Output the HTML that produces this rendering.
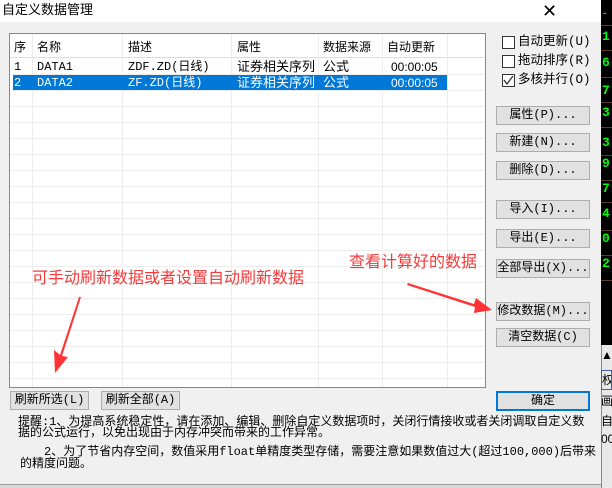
<!DOCTYPE html>
<html><head><meta charset="utf-8"><style>
*{margin:0;padding:0;box-sizing:border-box}
body{width:612px;height:488px;overflow:hidden;background:#f0f0f0;position:relative;font-family:"Liberation Sans","Noto Sans CJK SC",sans-serif;font-size:12px;color:#000}
.abs{position:absolute}
.title{left:0;top:0;width:601px;height:22px;background:#fff;font-size:13px;line-height:20px;padding-left:2px}
.strip{left:601px;top:0;width:11px;height:345px;background:#000}
.g{position:absolute;left:602px;color:#0f0;font-family:"Liberation Mono",monospace;font-size:13px;font-weight:bold;line-height:14px}
.hl{position:absolute;left:601px;width:11px;height:1px;background:#5a3a2a}
.list{left:9px;top:33px;width:477px;height:355px;background:#fff;border:1px solid #828790;overflow:hidden}
.hline{position:absolute;left:0;width:100%;height:1px;background:#ececec}
.vline{position:absolute;top:0;width:1px;height:100%;background:#ececec}
.cell{position:absolute;white-space:nowrap;line-height:16px}
.btn{position:absolute;background:#e1e1e1;border:1px solid #adadad;text-align:center;line-height:17px;height:19px;font-family:"Liberation Mono","Noto Sans CJK SC",monospace;font-size:12px}
.cb{position:absolute;left:502px;width:13px;height:13px;border:1px solid #333;background:#fff}
.cbl{position:absolute;left:518px;font-family:"Liberation Mono","Noto Sans CJK SC",monospace;font-size:12.5px;line-height:13px;white-space:nowrap}
.red{position:absolute;color:#f53a3a;font-size:16px;line-height:18px;white-space:nowrap}
.tip{position:absolute;left:18px;font-family:"Liberation Mono","Noto Sans CJK SC",monospace;font-size:12px;line-height:12px;white-space:nowrap;letter-spacing:0}
</style></head><body>
<div class="abs title">自定义数据管理</div>
<div class="abs" style="left:542px;top:2px;font-size:18px;line-height:18px;font-weight:300">✕</div>
<div class="abs strip"></div>
<div class="g" style="top:7px;font-size:9px">-</div>
<div class="hl" style="top:25px"></div>
<div class="g" style="top:30px">1</div><div class="hl" style="top:50px"></div>
<div class="g" style="top:56px">6</div><div class="hl" style="top:77px"></div>
<div class="g" style="top:84px">7</div><div class="hl" style="top:102px"></div>
<div class="g" style="top:106px">3</div><div class="hl" style="top:127px"></div>
<div class="g" style="top:136px">3</div><div class="hl" style="top:155px"></div>
<div class="g" style="top:157px">9</div><div class="hl" style="top:180px"></div>
<div class="g" style="top:182px">7</div><div class="hl" style="top:202px"></div>
<div class="g" style="top:207px">4</div><div class="hl" style="top:230px"></div>
<div class="g" style="top:232px">0</div><div class="hl" style="top:255px"></div>
<div class="g" style="top:257px">2</div><div class="hl" style="top:280px"></div>
<div class="abs" style="left:601px;top:345px;width:11px;height:143px;background:#e8e8e8;border-left:1px solid #888"></div>
<div class="abs" style="left:601px;top:348px;font-size:12px">▲</div>
<div class="abs" style="left:601px;top:370px;height:20px;width:11px;border:1px solid #4060a0;font-size:12px;overflow:hidden">权</div>
<div class="abs" style="left:601px;top:392px;width:11px;overflow:hidden;font-size:12px">画</div>
<div class="abs" style="left:601px;top:412px;width:11px;overflow:hidden;font-size:12px">自</div>
<div class="abs" style="left:601px;top:432px;width:11px;overflow:hidden;font-size:12px">00</div>
<div class="abs" style="left:0;top:484px;width:601px;height:4px;background:#d8d8d8;border-top:1px solid #999"></div>

<div class="abs list">
 <div class="hline" style="top:23px;background:#dcdcdc"></div>
 <div class="hline" style="top:40px"></div><div class="hline" style="top:56px"></div>
 <div class="hline" style="top:72px"></div><div class="hline" style="top:88px"></div>
 <div class="hline" style="top:104px"></div><div class="hline" style="top:120px"></div>
 <div class="hline" style="top:136px"></div><div class="hline" style="top:152px"></div>
 <div class="hline" style="top:168px"></div><div class="hline" style="top:184px"></div>
 <div class="hline" style="top:200px"></div><div class="hline" style="top:216px"></div>
 <div class="hline" style="top:232px"></div><div class="hline" style="top:248px"></div>
 <div class="hline" style="top:264px"></div><div class="hline" style="top:280px"></div>
 <div class="hline" style="top:296px"></div><div class="hline" style="top:312px"></div>
 <div class="hline" style="top:328px"></div><div class="hline" style="top:344px"></div>
 <div class="vline" style="left:22px"></div><div class="vline" style="left:112px"></div>
 <div class="vline" style="left:221px"></div><div class="vline" style="left:308px"></div>
 <div class="vline" style="left:372px"></div><div class="vline" style="left:437px"></div>
 <div class="abs" style="left:3px;top:41px;width:434px;height:15px;background:#0078d7"></div>
 <div class="cell" style="left:4px;top:5px">序</div>
 <div class="cell" style="left:27px;top:5px">名称</div>
 <div class="cell" style="left:118px;top:5px">描述</div>
 <div class="cell" style="left:227px;top:5px">属性</div>
 <div class="cell" style="left:313px;top:5px">数据来源</div>
 <div class="cell" style="left:377px;top:5px">自动更新</div>
 <div style="font-family:'Liberation Mono','Noto Sans CJK SC',monospace">
 <div class="cell" style="left:4px;top:25px">1</div>
 <div class="cell" style="left:27px;top:25px">DATA1</div>
 <div class="cell" style="left:118px;top:25px">ZDF.ZD(日线)</div>
 <div class="cell" style="left:227px;top:25px;font-family:'Liberation Sans','Noto Sans CJK SC',sans-serif;font-size:13px">证券相关序列</div>
 <div class="cell" style="left:313px;top:25px;font-family:'Liberation Sans','Noto Sans CJK SC',sans-serif;font-size:13px">公式</div>
 <div class="cell" style="left:381px;top:25px;font-family:'Liberation Sans',sans-serif">00:00:05</div>
 <div style="color:#fff">
 <div class="cell" style="left:4px;top:41px">2</div>
 <div class="cell" style="left:27px;top:41px">DATA2</div>
 <div class="cell" style="left:118px;top:41px">ZF.ZD(日线)</div>
 <div class="cell" style="left:227px;top:41px;font-family:'Liberation Sans','Noto Sans CJK SC',sans-serif;font-size:13px">证券相关序列</div>
 <div class="cell" style="left:313px;top:41px;font-family:'Liberation Sans','Noto Sans CJK SC',sans-serif;font-size:13px">公式</div>
 <div class="cell" style="left:381px;top:41px;font-family:'Liberation Sans',sans-serif">00:00:05</div>
 </div></div>
</div>

<div class="cb" style="top:36px"></div><div class="cbl" style="top:36px">自动更新(U)</div>
<div class="cb" style="top:55px"></div><div class="cbl" style="top:55px">拖动排序(R)</div>
<div class="cb" style="top:74px"></div><div class="cbl" style="top:74px">多核并行(O)</div>
<svg class="abs" style="left:503px;top:75px" width="11" height="11"><path d="M1 5 L4 9 L10 1" fill="none" stroke="#333" stroke-width="1.3"/></svg>

<div class="btn" style="left:496px;top:106px;width:94px">属性(P)...</div>
<div class="btn" style="left:496px;top:133px;width:94px">新建(N)...</div>
<div class="btn" style="left:496px;top:161px;width:94px">删除(D)...</div>
<div class="btn" style="left:496px;top:200px;width:94px">导入(I)...</div>
<div class="btn" style="left:496px;top:229px;width:94px">导出(E)...</div>
<div class="btn" style="left:496px;top:259px;width:94px">全部导出(X)...</div>
<div class="btn" style="left:496px;top:302px;width:94px">修改数据(M)...</div>
<div class="btn" style="left:496px;top:328px;width:94px">清空数据(C)</div>
<div class="btn" style="left:496px;top:391px;width:94px;height:20px;border:2px solid #0078d7;line-height:16px">确定</div>
<div class="btn" style="left:10px;top:391px;width:79px">刷新所选(L)</div>
<div class="btn" style="left:101px;top:391px;width:79px">刷新全部(A)</div>

<div class="red" style="left:32px;top:270px">可手动刷新数据或者设置自动刷新数据</div>
<div class="red" style="left:349px;top:254px">查看计算好的数据</div>
<svg class="abs" style="left:0;top:0" width="612" height="488">
<path d="M79 297 L60 355 L54 350 L55 373 L68 357 L62 356 L81 297Z" fill="#f33"/>
<path d="M408 283 L474 304 L476 298 L492 310 L474 313 L475 307 L407 285Z" fill="#f33"/>
</svg>

<div class="tip" style="top:416px">提醒:1、为提高系统稳定性，请在添加、编辑、删除自定义数据项时，关闭行情接收或者关闭调取自定义数</div>
<div class="tip" style="top:427px">据的公式运行，以免出现由于内存冲突而带来的工作异常。</div>
<div class="tip" style="top:446px;left:44px">2、为了节省内存空间，数值采用float单精度类型存储，需要注意如果数值过大(超过100,000)后带来</div>
<div class="tip" style="top:458px;left:20px">的精度问题。</div>
</body></html>
